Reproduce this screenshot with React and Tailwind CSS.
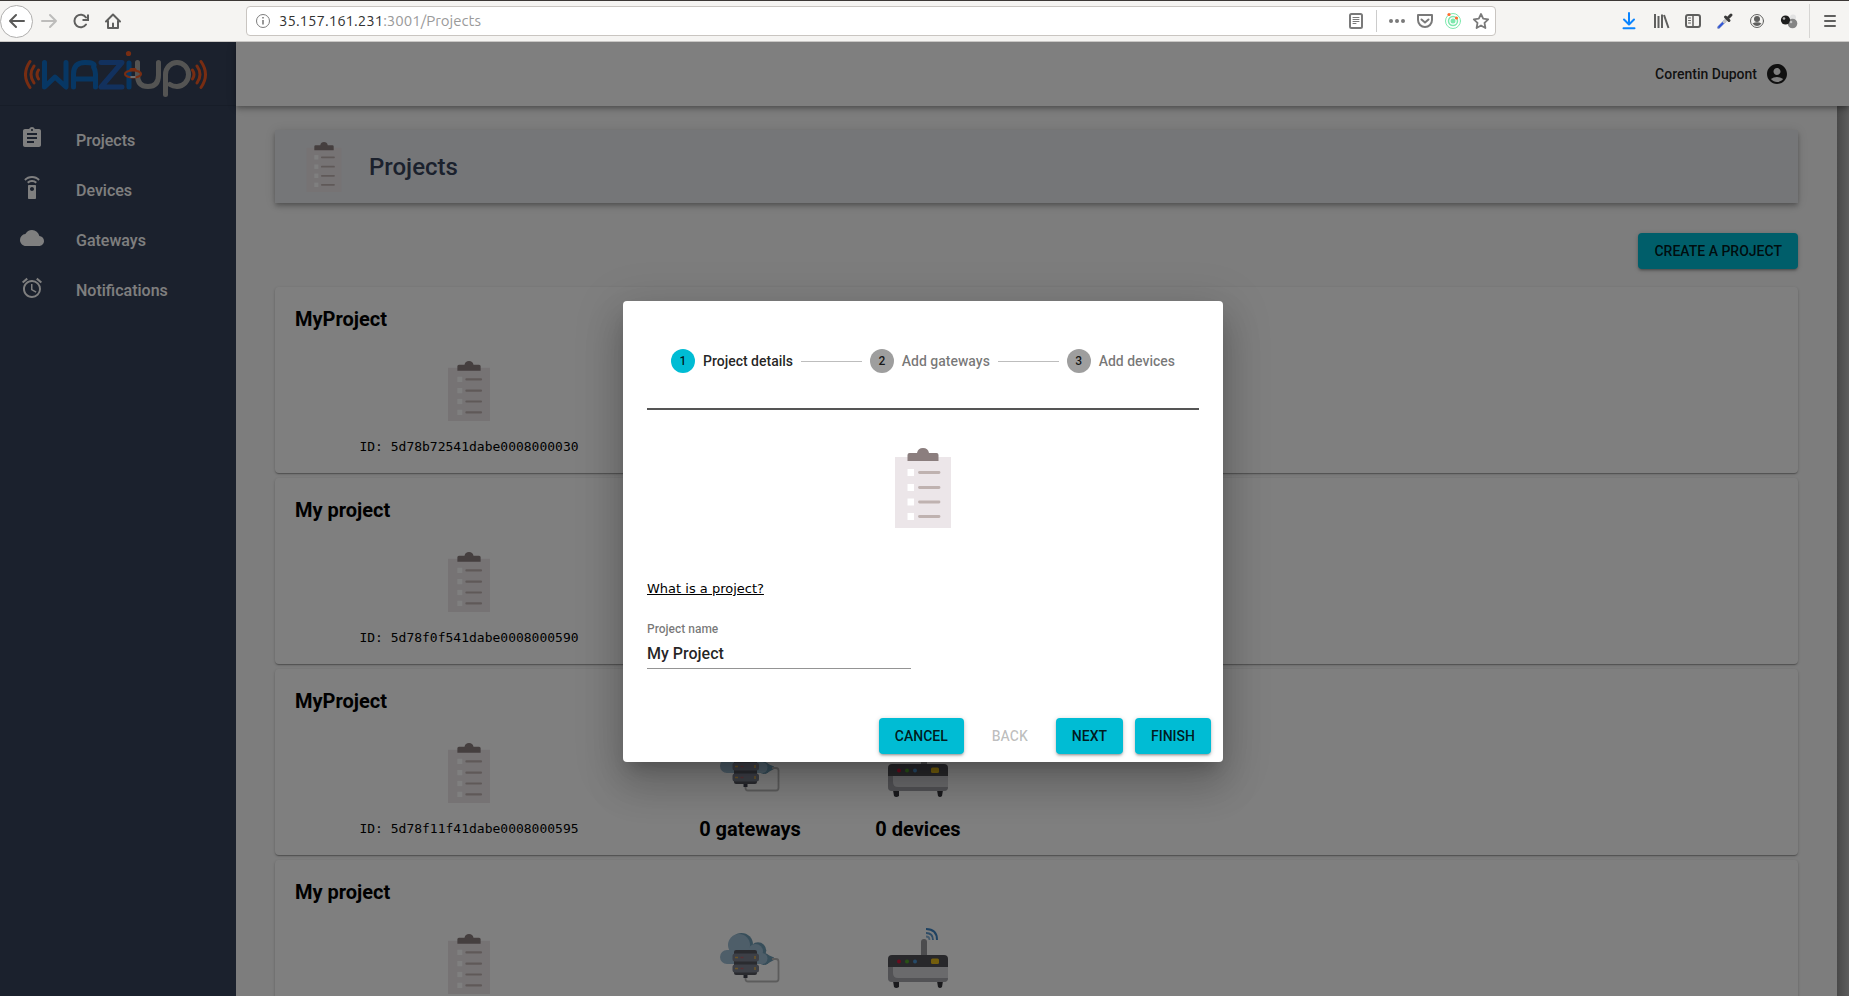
import { Fragment } from "react";
import { MdAssignment, MdSettingsRemote, MdCloud, MdAccessAlarm, MdAccountCircle } from "react-icons/md";

const navItems = [
  { label: "Projects", Icon: MdAssignment },
  { label: "Devices", Icon: MdSettingsRemote },
  { label: "Gateways", Icon: MdCloud },
  { label: "Notifications", Icon: MdAccessAlarm },
];

const projects = [
  { name: "MyProject", id: "5d78b72541dabe0008000030" },
  { name: "My project", id: "5d78f0f541dabe0008000590" },
  { name: "MyProject", id: "5d78f11f41dabe0008000595" },
  { name: "My project", id: "5d78f12541dabe0008000599" },
];

const steps = ["Project details", "Add gateways", "Add devices"];

const raised =
  "rounded bg-[#00bcd4] shadow-[0_1px_5px_rgba(0,0,0,0.2),0_2px_2px_rgba(0,0,0,0.14),0_3px_1px_-2px_rgba(0,0,0,0.12)]";

function Clipboard({ className }) {
  return (
    <svg viewBox="0 0 80 80" className={className} aria-hidden="true">
      <path d="M12 9h56v71H12z" fill="#ece6e9" />
      <path d="M24.500 13V7q0-2 2-2H34q1-5 6-5t6 5h7.500q2 0 2 2v6z" fill="#8b7e7e" />
      {[21, 36, 50.500, 65].map((y) => (
        <g key={y}>
          <path d={`M24.500 ${y}h6.500v7h-6.500z`} fill="#fff" />
          <path d={`M36.500 ${y + 3.500}H56`} stroke="#bfb2b0" strokeWidth="2.800" strokeLinecap="round" />
        </g>
      ))}
    </svg>
  );
}

function GatewayIcon() {
  return (
    <svg viewBox="0 0 60 60" className="size-[60px]" aria-hidden="true">
      <g fill="#6f9cb4">
        <circle cx="21.500" cy="16.500" r="11.500" />
        <circle cx="38" cy="22.500" r="8.300" />
        <circle cx="44" cy="31" r="6" />
        <path d="M46 26l8 3.500V32l-9 5z" />
      </g>
      <g fill="#9dbcd2">
        <circle cx="19" cy="17" r="11" />
        <circle cx="35.500" cy="23.500" r="7.500" />
        <circle cx="7" cy="29" r="7" />
        <circle cx="42" cy="30.500" r="5.500" />
        <path d="M7 22h33v14H7z" />
      </g>
      <path d="M52 31h4q2.500 0 2.500 2.500V51q0 2.500-2.500 2.500H28q-2.500 0-2.500-2.500v-4" fill="none" stroke="#b9b9b9" strokeWidth="1.800" />
      <path d="M14 24q0-2 2-2h19q2 0 2 2v21q0 2-2 2H16q-2 0-2-2z" fill="#55565f" />
      <path d="M12.500 28q0-2.500 2.500-2.500h21.500Q39 25.500 39 28v3q0 2.500-2.500 2.500H15q-2.500 0-2.500-2.500zM12.500 39q0-2.500 2.500-2.500h21.500Q39 36.500 39 39v3q0 2.500-2.500 2.500H15q-2.500 0-2.500-2.500z" fill="#7b808e" />
      <path d="M23.500 47h4v3h-4z" fill="#3f414c" />
      <path d="M15 29.500h3M15 40.500h3M35 28v3M35 39v3" stroke="#d8aa50" strokeWidth="1.600" />
      <path d="M20.500 29.500h3M20.500 40.500h3" stroke="#b0606b" strokeWidth="1.600" />
    </svg>
  );
}

function RouterIcon() {
  return (
    <svg viewBox="0 0 60 60" className="size-[60px]" aria-hidden="true">
      <path d="M33 28V14q0-3 3-3t3 3v14" fill="#98989d" />
      <path d="M5 53h6v6q-3 2-5 0zM49 53h6l-1 6q-2 2-4 0z" fill="#34343b" />
      <path d="M0 38h60v12q0 4-4 4H4q-4 0-4-4z" fill="#d4d4d9" />
      <path d="M0 38h5v7q0 5 5 5h50q0 4-4 4H4q-4 0-4-4z" fill="#a5a5ab" />
      <path d="M0 39v-8q0-4 4-4h52q4 0 4 4v8z" fill="#515157" />
      <circle cx="11" cy="33.500" r="2" fill="#d6173d" />
      <circle cx="19" cy="33.500" r="2" fill="#53a52a" />
      <circle cx="27" cy="33.500" r="2" fill="#4a92ce" />
      <rect x="43" y="30.500" width="8" height="5.500" rx="1.500" fill="#e8bd1b" />
      <path d="M38 1q11 0 11 11" fill="none" stroke="#3c83c2" strokeWidth="2" />
      <path d="M38 5q7 0 7 7" fill="none" stroke="#5c98cc" strokeWidth="1.800" />
      <path d="M38 8.500q3.500 0 3.500 3.500" fill="none" stroke="#8ab4d8" strokeWidth="1.800" />
    </svg>
  );
}

function Logo() {
  return (
    <svg viewBox="0 0 184 48" className="h-12 w-46" fill="none" strokeLinecap="round" role="img" aria-label="Waziup">
      <g stroke="#f15a24" strokeWidth="3">
        <path d="M6 11.500q-9 13 0 26M10 16q-6 8.500 0 17M14.500 20q-3 4.500 0 9M177 11.500q9 13 0 26M173 16q6 8.500 0 17M168.500 20q3 4.500 0 9" />
      </g>
      <g stroke="#0f6fc8" strokeWidth="5" strokeLinejoin="round">
        <path d="M20.500 12.500v24.500L31 27l11 10V12.500" />
        <path d="M49.500 37V24q0-11.500 11.500-11.500T69.500 17q2 3 2 7v13M49.500 29h22" />
        <path d="M77 12.500h21L77 37h21" stroke="#2463bd" />
        <path d="M105 13v24" />
      </g>
      <path d="M113.500 12.500V25q0 11.500 10.500 11.500T134.500 25V12.500" stroke="#a9a9a7" strokeWidth="5" />
      <path d="M141.500 44.500V24.500a11.500 12 0 1 1 11.500 12q-4 0-7-2" stroke="#a9a9a7" strokeWidth="5" />
      <circle cx="104.500" cy="3.500" r="2.600" fill="#f15a24" />
      <path d="M107 19.500h4" stroke="#f15a24" strokeWidth="3" />
      <ellipse cx="109" cy="24" rx="8" ry="3.500" stroke="#f15a24" strokeWidth="2.200" />
      <path d="M106.500 27h5" stroke="#ddd" strokeWidth="2" strokeLinecap="butt" />
    </svg>
  );
}

function BarIcon({ children, className = "w-8 text-[#5f5f5e]", label }) {
  return (
    <button type="button" aria-label={label} className={`flex h-8 shrink-0 items-center justify-center ${className}`}>
      <svg viewBox="0 0 16 16" className="size-4 overflow-visible" fill="none" stroke="currentColor" strokeWidth="2" strokeLinecap="round" strokeLinejoin="round">
        {children}
      </svg>
    </button>
  );
}

function BrowserBar() {
  return (
    <div className="flex h-[42px] items-center border-t border-b border-t-[#3c3836] border-b-[#c9c7c5] bg-[#f5f4f2]">
      <div className="flex w-[246px] items-center">
        <button type="button" aria-label="Back" className="flex size-[33px] items-center justify-center rounded-full border border-[#b0afae] bg-white text-[#5a5a59]">
          <svg viewBox="0 0 16 16" className="size-4" fill="none" stroke="currentColor" strokeWidth="2" strokeLinecap="round" strokeLinejoin="round">
            <path d="M15 8H1M7 2L1 8l6 6" />
          </svg>
        </button>
        <BarIcon label="Forward" className="w-8 text-[#bdbcbb]"><path d="M1 8h14M9 2l6 6-6 6" /></BarIcon>
        <BarIcon label="Reload"><path d="M13 11.500a6.300 6.300 0 1 1 0-7" /><path d="M15 1.500V7H9.500" strokeLinecap="butt" strokeLinejoin="miter" /></BarIcon>
        <BarIcon label="Home"><path d="M1 8.500l7-7 7 7M3 8v7h10V8M8 14v-3.500" /></BarIcon>
      </div>
      <div className="flex h-[30px] w-[1250px] items-center rounded border border-[#c9c5c1] bg-white pl-[9px]">
        <svg viewBox="0 0 14 14" className="size-3.5 overflow-visible text-[#7d7d7d]" fill="none" stroke="currentColor" aria-hidden="true">
          <circle cx="7" cy="7" r="6.500" />
          <path d="M7 6v4.500M7 3v1.500" strokeWidth="1.600" />
        </svg>
        <div className="ml-[9px] flex-1 font-[Ubuntu,'Noto_Sans',sans-serif] text-[15px] text-[#9a9a9a]">
          <span className="text-[#333]">35.157.161.231</span>:3001/Projects
        </div>
        <BarIcon label="Reader view" className="w-7 text-[#7a7a7a]">
          <rect x="2" y="1" width="12" height="14" rx="1.500" />
          <path d="M5 4.500h6M5 6.500h6M5 8.500h6M5 10.500h3" strokeWidth="1" />
        </BarIcon>
        <div className="mx-1.5 h-[22px] w-px bg-[#ccc]" />
        <BarIcon label="Page actions" className="w-7 text-[#7a7a7a]"><path d="M2 8h.01M8 8h.01M14 8h.01" strokeWidth="4" /></BarIcon>
        <BarIcon label="Save to Pocket" className="w-7 text-[#7a7a7a]">
          <path d="M1 2h14v5a7 7 0 0 1-14 0zM4.500 6.500L8 9.500l3.500-3" />
        </BarIcon>
        <BarIcon label="Extension" className="w-7 text-[#7ee8ae]">
          <circle cx="8" cy="8" r="7.500" strokeWidth="1" /><circle cx="8" cy="8" r="4.500" strokeWidth="1.500" />
          <circle cx="8" cy="8" r="1.500" fill="currentColor" />
          <circle cx="4" cy="1.500" r="1.600" fill="#ff6b2c" stroke="none" /><circle cx="11.500" cy="5" r="1.600" fill="#ff6b2c" stroke="none" />
        </BarIcon>
        <BarIcon label="Bookmark" className="w-7 text-[#7a7a7a]"><path d="M8 1l2.200 4.700 5 .7-3.700 3.500.9 5.100L8 12.500 3.600 15l.9-5.100L.8 6.400l5-.7z" strokeWidth="1.800" /></BarIcon>
      </div>
      <div className="flex flex-1 items-center justify-end pr-[3px]">
        <BarIcon label="Downloads" className="w-8 text-[#0a84ff]"><path d="M8 0v11M3 6.500l5 5 5-5M2.500 15.300h11" /></BarIcon>
        <BarIcon label="Library"><path d="M2 1v14M5.500 3v12M9 1.500V15M11 2l4.500 13" strokeLinecap="butt" /></BarIcon>
        <BarIcon label="Sidebar"><rect x="1" y="2" width="14" height="12" rx="2" /><path d="M8 2v12" strokeWidth="1.500" /><path d="M3.500 5h2M3.500 7.500h2M3.500 10h2" strokeWidth="1" /></BarIcon>
        <BarIcon label="Color picker"><path d="M1.500 14.500L8 8" stroke="#8b98c4" strokeWidth="3" /><path d="M2 14L6 10" stroke="#2f55d8" strokeWidth="1.800" /><path d="M7 9l3-3" stroke="#c4c4c4" strokeWidth="2.500" /><path d="M8.500 4l3.500 3.500M11 5l3-3" strokeWidth="3" stroke="#3a3a3a" /></BarIcon>
        <BarIcon label="Account"><circle cx="8" cy="8" r="6.500" strokeWidth="1" /><circle cx="8" cy="6" r="3" fill="currentColor" stroke="none" /><path d="M3.500 10.500q4.500-2.500 9 0-4.500 5-9 0" fill="currentColor" stroke="none" /></BarIcon>
        <BarIcon label="Add-on"><circle cx="12" cy="4.500" r="3" fill="#e2e2e2" stroke="none" /><circle cx="11.500" cy="10.500" r="4.800" fill="#858585" stroke="none" /><circle cx="4.500" cy="7" r="4.600" fill="#1d1d1d" stroke="none" /><circle cx="3" cy="5.500" r="1.300" fill="#b5b5b5" stroke="none" /><circle cx="10" cy="9" r="1.300" fill="#c5c5c5" stroke="none" /></BarIcon>
        <div className="mx-1 h-[34px] w-px bg-[#d6d5d3]" />
        <BarIcon label="Menu"><path d="M3 3h10M3 8h10M3 13h10" /></BarIcon>
      </div>
    </div>
  );
}

function ProjectCard({ name, id }) {
  return (
    <article className="h-[186px] shrink-0 rounded bg-white px-5 pt-[19px] shadow-[0_1px_3px_rgba(0,0,0,0.2),0_1px_1px_rgba(0,0,0,0.14),0_2px_1px_-1px_rgba(0,0,0,0.12)]">
      <h3 className="text-[20px] leading-[26px] font-bold text-black">{name}</h3>
      <div className="flex items-end pt-[23px] text-center">
        <div className="flex w-[348px] flex-col items-center gap-4">
          <Clipboard className="size-[60px]" />
          <p className="font-['DejaVu_Sans_Mono',monospace] text-[13px] leading-5 text-black">ID: {id}</p>
        </div>
        <div className="flex w-[214px] flex-col items-center gap-[22px]">
          <GatewayIcon />
          <p className="text-[20px] leading-5 font-bold text-black">0 gateways</p>
        </div>
        <div className="flex w-[122px] flex-col items-center gap-[22px]">
          <RouterIcon />
          <p className="text-[20px] leading-5 font-bold text-black">0 devices</p>
        </div>
      </div>
    </article>
  );
}

function CreateDialog() {
  return (
    <div role="dialog" aria-label="Create a project" className="w-[600px] rounded bg-white shadow-[0_11px_15px_-7px_rgba(0,0,0,0.2),0_24px_38px_3px_rgba(0,0,0,0.14),0_9px_46px_8px_rgba(0,0,0,0.12)]">
      <div className="px-6 pt-6">
        <ol className="flex items-center gap-2 p-6 text-[14px] leading-6 font-medium">
          {steps.map((step, i) => (
            <Fragment key={step}>
              {i > 0 && <li aria-hidden="true" className="h-px flex-1 bg-[#bdbdbd]" />}
              <li className="flex items-center gap-2">
                <span className={`flex size-6 items-center justify-center rounded-full text-[12px] text-black/87 ${i ? "bg-[#9e9e9e]" : "bg-[#00bcd4]"}`}>
                  {i + 1}
                </span>
                <span className={i ? "text-black/54" : "text-black/87"}>{step}</span>
              </li>
            </Fragment>
          ))}
        </ol>
        <hr className="mt-[11px] border-t-2 border-[#555]" />
        <Clipboard className="mx-auto mt-[38px] size-20" />
        <div className="mt-[51px] font-['DejaVu_Sans',sans-serif] text-[13px] leading-5">
          <a href="#project-help" className="text-black underline">What is a project?</a>
        </div>
        <div className="mt-5 flex w-[264px] flex-col border-b border-[#949494]">
          <label htmlFor="project-name" className="text-[12px] leading-5 font-medium text-black/54">Project name</label>
          <input id="project-name" defaultValue="My Project" className="h-[29px] text-[16px] font-medium text-black/87 outline-none" />
        </div>
      </div>
      <div className="flex justify-end gap-3 px-3 pt-[49px] pb-2 text-[14px] font-medium text-black/87">
        <button type="button" className={`h-9 px-4 ${raised}`}>CANCEL</button>
        <button type="button" disabled className="h-9 px-4 text-black/26">BACK</button>
        <button type="button" className={`h-9 px-4 ${raised}`}>NEXT</button>
        <button type="button" className={`h-9 px-4 ${raised}`}>FINISH</button>
      </div>
    </div>
  );
}

export default function App() {
  return (
    <div className="flex h-screen flex-col overflow-hidden font-[Roboto,sans-serif]">
      <BrowserBar />
      <div className="relative flex min-h-0 flex-1 overflow-hidden">
        <aside className="w-[236px] shrink-0 bg-[#36425a]">
          <div className="flex h-16 items-start border-b border-[#2f3a50] pt-2 pl-6">
            <Logo />
          </div>
          <nav className="flex flex-col pt-[10px]">
            {navItems.map(({ label, Icon }) => (
              <a key={label} href={`#${label}`} className="flex h-[50px] items-center gap-8 pl-5 text-[16px] font-medium text-white">
                <Icon className="mb-1.5 size-6" />
                <span>{label}</span>
              </a>
            ))}
          </nav>
        </aside>
        <div className="flex min-w-0 flex-1 flex-col">
          <header className="z-10 flex h-16 shrink-0 items-center justify-end gap-2 bg-white pr-15 text-[14px] font-medium text-black/87 shadow-[0_2px_4px_-1px_rgba(0,0,0,0.2),0_4px_5px_rgba(0,0,0,0.14),0_1px_10px_rgba(0,0,0,0.12)]">
            Corentin Dupont
            <MdAccountCircle className="size-6" />
          </header>
          <div className="flex min-h-0 flex-1">
            <main className="flex min-w-0 flex-1 flex-col overflow-hidden bg-[#fafafa] px-[39px] pt-6">
              <div className="flex h-[73px] shrink-0 items-center bg-[#eaedf1] pl-6 shadow-[0_2px_4px_-1px_rgba(0,0,0,0.2),0_4px_5px_rgba(0,0,0,0.14),0_1px_10px_rgba(0,0,0,0.12)]">
                <Clipboard className="size-[50px]" />
                <h1 className="pl-5 text-[24px] font-medium text-[#36425a]">Projects</h1>
              </div>
              <button type="button" className={`mt-[30px] mb-[18px] h-9 shrink-0 self-end px-4 text-[14px] font-medium text-black/87 ${raised}`}>
                CREATE A PROJECT
              </button>
              <div className="flex flex-col gap-[5px]">
                {projects.map((p) => (
                  <ProjectCard key={p.id} {...p} />
                ))}
              </div>
            </main>
            <div className="w-3 bg-linear-to-r from-[#929292] to-[#bababa]" />
          </div>
        </div>
        <div className="absolute inset-0 z-20 flex items-center justify-center bg-black/50 pt-[25px] pr-[3px]">
          <CreateDialog />
        </div>
      </div>
    </div>
  );
}
